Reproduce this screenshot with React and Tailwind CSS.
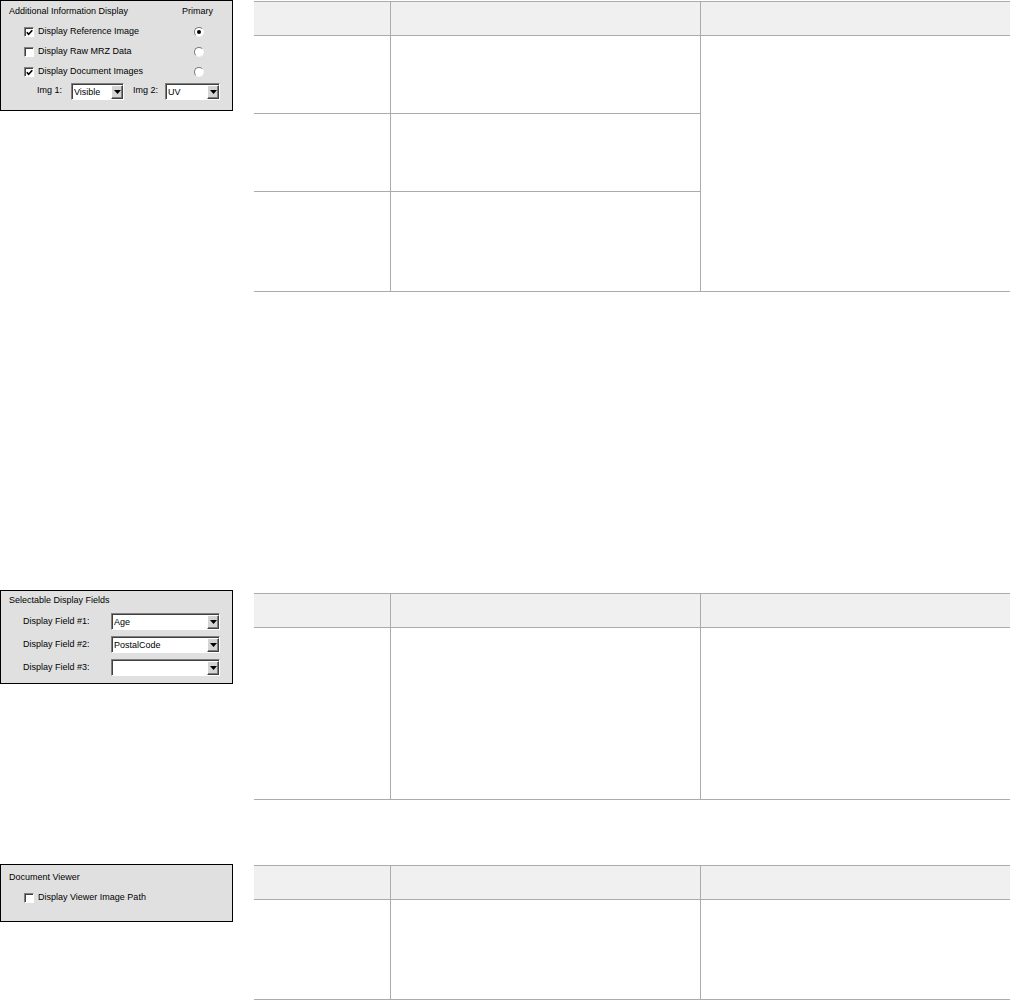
import React from 'react';

const line = 'border-[#ababab]';

function Checkbox({ checked }) {
  return (
    <span className="flex h-[10px] w-[10px] shrink-0 items-center justify-center border border-t-[#808080] border-l-[#808080] border-b-white border-r-white bg-white shadow-[inset_1px_1px_0_#404040]">
      {checked && (
        <svg width="7" height="7" viewBox="0 0 7 7">
          <path d="M0.8 3.2 L2.6 5.2 L6.3 1.2" stroke="#000" strokeWidth="1.6" fill="none" />
        </svg>
      )}
    </span>
  );
}

function Radio({ checked }) {
  return (
    <span className="flex h-[10px] w-[10px] items-center justify-center rounded-full border border-t-[#7a7a7a] border-l-[#7a7a7a] border-b-[#f4f4f4] border-r-[#f4f4f4] bg-white">
      {checked && <span className="h-[4px] w-[4px] rounded-full bg-black" />}
    </span>
  );
}

function Select({ value, className }) {
  return (
    <div className={`flex h-[17px] items-stretch border border-t-[#808080] border-l-[#808080] border-b-white border-r-white bg-white shadow-[inset_1px_1px_0_#404040] ${className}`}>
      <span className="flex-1 pl-[2px] pt-[1px] text-[9px] leading-[14px] text-black">{value}</span>
      <span className="mt-[1px] mb-0 flex w-[12px] items-center justify-center border border-t-white border-l-white border-b-[#404040] border-r-[#404040] bg-[#d4d4d4] shadow-[inset_-1px_-1px_0_#808080]">
        <svg width="7" height="4" viewBox="0 0 7 4">
          <path d="M0 0 H7 L3.5 4 Z" fill="#000" />
        </svg>
      </span>
    </div>
  );
}

function Table({ rows, span }) {
  return (
    <div className={`grid flex-1 grid-cols-[137px_310px_1fr] border-t border-b ${line}`}>
      <div className={`h-[34px] border-b border-r bg-[#f0f0f0] ${line}`} />
      <div className={`h-[34px] border-b border-r bg-[#f0f0f0] ${line}`} />
      <div className={`h-[34px] border-b bg-[#f0f0f0] ${line}`} />
      {rows.map((h, i) => {
        const last = i === rows.length - 1;
        return (
          <React.Fragment key={i}>
            <div className={`border-r ${last ? '' : 'border-b'} ${line}`} style={{ height: h }} />
            <div className={`border-r ${last ? '' : 'border-b'} ${line}`} style={{ height: h }} />
            {span ? i === 0 && <div className="row-span-3" /> : <div />}
          </React.Fragment>
        );
      })}
    </div>
  );
}

export default function App() {
  return (
    <div className="w-[1010px] bg-white font-['Liberation_Sans',Arial,sans-serif] text-[9px] text-black">
      {/* additional info */}
      <div className="flex items-start">
        <div className="h-[111px] w-[233px] shrink-0 border border-black bg-[#e0e0e0]">
          <div className="flex h-[21px] items-center justify-between pl-[8px] pr-[19px]">
            <span>Additional Information Display</span>
            <span>Primary</span>
          </div>
          {[
            ['Display Reference Image', true, true],
            ['Display Raw MRZ Data', false, false],
            ['Display Document Images', true, false],
          ].map(([label, checked, primary]) => (
            <div key={label} className="flex h-[20px] items-center pl-[23px]">
              <Checkbox checked={checked} />
              <span className="ml-[4px] flex-1">{label}</span>
              <span className="mr-[28px]">
                <Radio checked={primary} />
              </span>
            </div>
          ))}
          <div className="flex h-[18px] items-center pl-[36px]">
            <span className="w-[34px]">Img 1:</span>
            <Select value="Visible" className="w-[53px]" />
            <span className="ml-[9px] w-[32px]">Img 2:</span>
            <Select value="UV" className="w-[55px]" />
          </div>
        </div>
        <div className="ml-[21px] mt-[1px] flex flex-1">
          <Table rows={[78, 78, 99]} span />
        </div>
      </div>

      {/* selectable fields */}
      <div className="mt-[298px] flex items-start">
        <div className="h-[94px] w-[233px] shrink-0 border border-black bg-[#e0e0e0]">
          <div className="flex h-[19px] items-center pl-[8px]">Selectable Display Fields</div>
          {[
            ['Display Field #1:', 'Age'],
            ['Display Field #2:', 'PostalCode'],
            ['Display Field #3:', ''],
          ].map(([label, value]) => (
            <div key={label} className="flex h-[23px] items-center pl-[22px]">
              <span className="w-[88px]">{label}</span>
              <Select value={value} className="w-[109px]" />
            </div>
          ))}
        </div>
        <div className="ml-[21px] mt-[3px] flex flex-1">
          <Table rows={[171]} />
        </div>
      </div>

      {/* document viewer */}
      <div className="mt-[64px] flex items-start">
        <div className="h-[58px] w-[233px] shrink-0 border border-black bg-[#e0e0e0] pt-[3px]">
          <div className="flex h-[20px] items-center pl-[8px]">Document Viewer</div>
          <div className="flex h-[20px] items-center pl-[23px]">
            <Checkbox checked={false} />
            <span className="ml-[4px]">Display Viewer Image Path</span>
          </div>
        </div>
        <div className="ml-[21px] mt-[1px] flex flex-1">
          <Table rows={[99]} />
        </div>
      </div>
    </div>
  );
}
